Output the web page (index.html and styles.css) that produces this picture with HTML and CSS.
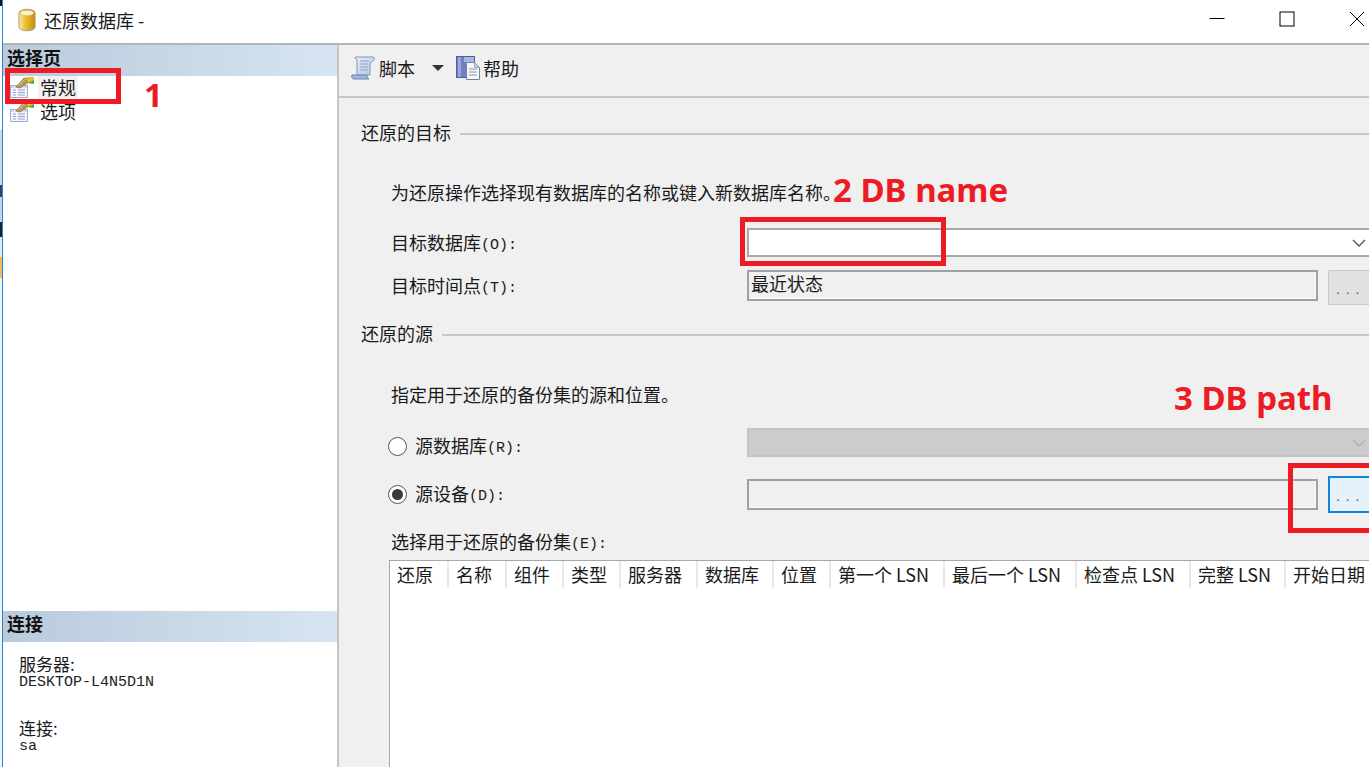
FILE: index.html
```html
<!DOCTYPE html>
<html lang="zh-CN">
<head>
    <meta charset="utf-8">
    <title>还原数据库</title>
    <link rel="stylesheet" href="styles.css">
</head>
<body>
    <svg class="defs" width="0" height="0">
        <symbol id="page-icon" viewBox="0 0 24 21">
            <rect x="0.500" y="8.500" width="17" height="12" fill="#f3f5fb" stroke="#a3aec8"/>
            <rect x="1" y="9" width="16" height="2" fill="#d3dcef"/>
            <path d="M3 13h3M3 15.500h3M3 18h3M8 13h7M8 15.500h7M8 18h7" stroke="#8ea3d0" stroke-width="1.200"/>
            <path d="M6 10l8-9 3 1 2 3-9 6z" fill="#b99a55" stroke="#857343" stroke-width=".7"/>
            <path d="M8 9l7-7" stroke="#e3cf96" stroke-width=".8"/>
            <path d="M15 1l8-1 1 3-5 3z" fill="#e9c61f" stroke="#a89222" stroke-width=".5"/>
            <path d="M18 6l6-3v4z" fill="#4fa83a"/>
        </symbol>
    </svg>

    <div class="window">
        <header class="titlebar">
            <svg class="db-icon" width="18" height="24" viewBox="0 0 20 24" preserveAspectRatio="none">
                <defs>
                    <linearGradient id="dbfill" x1="0" x2="1" y1="0" y2="0">
                        <stop offset="0" stop-color="#f7e9a0"/>
                        <stop offset=".45" stop-color="#e8bd2e"/>
                        <stop offset="1" stop-color="#c98d08"/>
                    </linearGradient>
                </defs>
                <path d="M1 5c0-5 18-5 18 0v14c0 5-18 5-18 0z" fill="url(#dbfill)" stroke="#a8a08a"/>
                <ellipse cx="10" cy="5" rx="7.500" ry="2.800" fill="#fbf3c4" stroke="#c9b060" stroke-width=".7"/>
            </svg>
            <span class="title-text">还原数据库 -</span>
            <div class="win-controls">
                <svg width="16" height="16" viewBox="0 0 16 16"><path d="M0.500 7.500h15" stroke="#000" fill="none"/></svg>
                <svg width="16" height="16" viewBox="0 0 16 16"><rect x="1" y="1" width="14" height="14" stroke="#000" fill="none"/></svg>
                <svg width="16" height="16" viewBox="0 0 16 16"><path d="M1 1l14 14M15 1L1 15" stroke="#000" fill="none"/></svg>
            </div>
        </header>

        <div class="main">
            <aside class="sidebar">
                <h2 class="side-head">选择页</h2>
                <ul class="page-list">
                    <li class="page-item">
                        <svg class="page-icon" width="24" height="21"><use href="#page-icon"/></svg>
                        <span class="page-name selected">常规</span>
                    </li>
                    <li class="page-item">
                        <svg class="page-icon" width="24" height="21"><use href="#page-icon"/></svg>
                        <span class="page-name">选项</span>
                    </li>
                </ul>
                <div class="connection">
                    <h2 class="side-head">连接</h2>
                    <div class="conn-info">
                        <div class="conn-label">服务器:</div>
                        <div class="conn-value">DESKTOP-L4N5D1N</div>
                        <div class="conn-label second">连接:</div>
                        <div class="conn-value">sa</div>
                    </div>
                </div>
            </aside>

            <section class="content">
                <div class="toolbar">
                    <svg width="26" height="26" viewBox="0 0 26 26">
                        <defs>
                            <linearGradient id="scroll" x1="0" x2="1" y1="0" y2="1">
                                <stop offset="0" stop-color="#e6edf8"/>
                                <stop offset="1" stop-color="#b4c8e4"/>
                            </linearGradient>
                        </defs>
                        <path d="M6 2h17c1.500 0 2 2 .5 3.500L20 8v12H7V6C7 4 6 3 4.500 3z" fill="url(#scroll)" stroke="#7d97bc"/>
                        <path d="M2 20h15c0 1.500 .5 3 2 4H4c-2 0-3-3-2-4z" fill="#9db8dc" stroke="#6a88b2"/>
                        <path d="M10 6h9M10 9h8M10 12h8M10 15h8" stroke="#8aa2c6"/>
                    </svg>
                    <span class="tool-text">脚本</span>
                    <span class="tool-arrow"></span>
                    <svg width="25" height="26" viewBox="0 0 25 26">
                        <rect x="0.500" y="1.500" width="18" height="21" fill="#6f80c4" stroke="#4d5f9c"/>
                        <rect x="2" y="2" width="3" height="20" fill="#98a8dc"/>
                        <rect x="8" y="2" width="10" height="5" fill="#a9b8e2"/>
                        <path d="M10.500 7.500h8l5 5v12h-13z" fill="#f5f7fb" stroke="#71849f"/>
                        <path d="M18.500 7.500v5h5z" fill="#c9d3e2" stroke="#71849f" stroke-width=".6"/>
                        <path d="M13 14h8M13 17h8M13 20h8" stroke="#8898ae"/>
                    </svg>
                    <span class="tool-text help">帮助</span>
                </div>

                <div class="form">
                    <div class="section-title first">还原的目标</div>
                    <div class="group">
                        <p class="hint first-hint">为还原操作选择现有数据库的名称或键入新数据库名称。</p>
                        <div class="row combo-row">
                            <label>目标数据库<span class="mono">(O):</span></label>
                            <div class="combo">
                                <svg class="chevron" width="14" height="8" viewBox="0 0 14 8"><path d="M1 1l6 6 6-6" fill="none" stroke="#606060" stroke-width="1.500"/></svg>
                            </div>
                        </div>
                        <div class="row time-row">
                            <label>目标时间点<span class="mono">(T):</span></label>
                            <div class="field">最近状态</div>
                            <div class="dots-btn">. . .</div>
                        </div>
                    </div>

                    <div class="section-title second">还原的源</div>
                    <div class="group">
                        <p class="hint second-hint">指定用于还原的备份集的源和位置。</p>
                        <div class="row source-row">
                            <label class="radio-label"><span class="radio"></span><span class="label-text">源数据库<span class="mono">(R):</span></span></label>
                            <div class="combo disabled">
                                <svg class="chevron" width="14" height="8" viewBox="0 0 14 8"><path d="M1 1l6 6 6-6" fill="none" stroke="#b4b4b4" stroke-width="1.500"/></svg>
                            </div>
                        </div>
                        <div class="row device-row">
                            <label class="radio-label"><span class="radio on"></span><span class="label-text">源设备<span class="mono">(D):</span></span></label>
                            <div class="field"></div>
                            <div class="dots-btn hover">. . .</div>
                        </div>
                        <div class="backup-label">选择用于还原的备份集<span class="mono">(E):</span></div>
                        <div class="backup-table">
                            <div class="table-head">
                                <span class="col">还原</span>
                                <span class="col">名称</span>
                                <span class="col">组件</span>
                                <span class="col">类型</span>
                                <span class="col">服务器</span>
                                <span class="col">数据库</span>
                                <span class="col">位置</span>
                                <span class="col">第一个 LSN</span>
                                <span class="col">最后一个 LSN</span>
                                <span class="col">检查点 LSN</span>
                                <span class="col">完整 LSN</span>
                                <span class="col last">开始日期</span>
                            </div>
                        </div>
                    </div>
                </div>
            </section>
        </div>
    </div>

    <!-- annotations drawn on top of the screenshot -->
    <div class="mark mark-1"></div>
    <div class="mark mark-2"></div>
    <div class="mark mark-3"></div>
    <div class="note note-1">1</div>
    <div class="note note-2">2 DB name</div>
    <div class="note note-3">3 DB path</div>
</body>
</html>
```

FILE: styles.css
```css
* {
    box-sizing: border-box;
}

html, body {
    margin: 0;
    height: 767px;
    overflow: hidden;
}

body {
    position: relative;
    /* bits of the desktop showing left of the window */
    background:
        linear-gradient(to bottom,
            #111 0, #111 6px,
            #fff 6px, #fff 130px,
            #d8d8d8 130px, #d8d8d8 185px,
            #3a3f6a 185px, #3a3f6a 197px,
            #c4d4e4 197px, #c4d4e4 222px,
            #222 222px, #222 237px,
            #e8e8e8 237px, #e8e8e8 257px,
            #e8c15a 257px, #e8c15a 278px,
            #f4f4f4 278px) no-repeat left top / 2px 100%,
        #fff;
    color: #1a1a1a;
    font-family: "Noto Sans CJK SC", "Liberation Sans", sans-serif;
    font-size: 18px;
}

.defs {
    position: absolute;
}

.window {
    height: 767px;
    margin-left: 2px;
    border-left: 1px solid #1a86e0;
    display: flex;
    flex-direction: column;
    overflow: hidden;
}

.titlebar {
    height: 43px;
    flex: none;
    display: flex;
    align-items: center;
    padding: 0 0 4px 15px;
    background: #fff;
}

.db-icon {
    margin-right: 8px;
}

.title-text {
    line-height: 1;
}

.win-controls {
    margin-left: auto;
    margin-right: 4px;
    display: flex;
    gap: 54px;
    padding-bottom: 1px;
}

.main {
    flex: 1;
    display: flex;
    min-height: 0;
    border-top: 2px solid #b4b4b4;
}

.sidebar {
    width: 336px;
    flex: none;
    background: #fff;
    border-right: 2px solid #c4c4c4;
    display: flex;
    flex-direction: column;
}

.side-head {
    margin: 0;
    height: 31px;
    padding-left: 4px;
    font-size: 18px;
    font-weight: 700;
    line-height: 24px;
    color: #111;
    background: linear-gradient(to right, #b9cadb, #d7e5f2);
}

.page-list {
    list-style: none;
    margin: 0;
    padding: 0;
}

.page-item {
    height: 24px;
    display: flex;
    align-items: center;
    padding: 0 0 2px 7px;
}

.page-icon {
    flex: none;
}

.page-name {
    margin-left: 4px;
    padding: 0 2px;
    line-height: 22px;
}

.page-name.selected {
    background: #f1f1f1;
}

.connection {
    margin-top: auto;
    height: 156px;
}

.conn-info {
    padding: 12px 0 0 16px;
}

.conn-label {
    line-height: 20px;
    font-size: 17px;
    height: 20px;
}

.conn-label.second {
    margin-top: 26px;
}

.conn-value {
    font-family: "Liberation Mono", monospace;
    font-size: 15px;
    line-height: 17px;
    height: 18px;
    color: #222;
}

.content {
    flex: 1;
    min-width: 0;
    background: #f0f0f0;
}

.toolbar {
    height: 53px;
    display: flex;
    align-items: center;
    padding: 0 0 5px 11px;
    border-bottom: 2px solid #c4c4ca;
}

.tool-text {
    margin-left: 3px;
}

.tool-text.help {
    margin-left: 2px;
}

.tool-arrow {
    width: 0;
    height: 0;
    margin: 0 12px 0 17px;
    border-left: 6px solid transparent;
    border-right: 6px solid transparent;
    border-top: 6px solid #333;
}

.form {
    padding-left: 22px;
}

.section-title {
    height: 24px;
    line-height: 24px;
    display: flex;
    align-items: center;
    gap: 9px;
}

.section-title::after {
    content: "";
    flex: 1;
    height: 2px;
    margin-top: 4px;
    background: #c8c8c8;
}

.section-title.first {
    margin-top: 22px;
}

.section-title.second {
    margin-top: 16px;
}

.group {
    padding-left: 30px;
}

.hint {
    margin: 0;
    height: 24px;
    line-height: 24px;
}

.first-hint {
    margin-top: 36px;
}

.second-hint {
    margin-top: 37px;
}

.mono {
    font-family: "Liberation Mono", monospace;
    font-size: 15px;
    line-height: 1;
    vertical-align: 1px;
}

.row {
    display: grid;
    grid-template-columns: 356px 571px 10px 1fr;
    align-items: center;
}

.row label {
    grid-column: 1;
    line-height: 29px;
}

.combo-row {
    margin-top: 24px;
    height: 29px;
}

.time-row {
    margin-top: 13px;
    height: 35px;
    align-items: start;
}

.time-row label {
    line-height: 31px;
}

.source-row {
    margin-top: 22px;
    height: 29px;
}

.source-row label {
    height: 29px;
    padding-top: 7px;
}

.device-row {
    margin-top: 19px;
    height: 37px;
}

.combo {
    grid-column: 2 / 5;
    height: 29px;
    background: #fff;
    border: 2px solid #a8a8a8;
    border-right: none;
    display: flex;
    align-items: center;
    justify-content: flex-end;
    padding-right: 3px;
}

.combo.disabled {
    background: #cccccc;
    border-color: #c4c4c4;
}

.field {
    grid-column: 2;
    height: 31px;
    border: 2px solid #a0a0a0;
    box-shadow: inset -1px -1px 0 #fafafa;
    background: #f0f0f0;
    padding-left: 2px;
    line-height: 23px;
}

.dots-btn {
    grid-column: 4;
    height: 35px;
    background: #e1e1e1;
    border: 1px solid #c9c9c9;
    border-right: none;
    padding-left: 7px;
    font-family: "Liberation Sans", sans-serif;
    font-size: 14px;
    line-height: 36px;
    letter-spacing: 1px;
    color: #555;
}

.dots-btn.hover {
    height: 37px;
    background: #e5f1fb;
    border: 2px solid #0f85dc;
    border-right: none;
    padding-left: 6px;
}

.radio-label {
    margin-left: -3px;
    display: flex;
    align-items: center;
}

.label-text {
    margin-top: -2px;
}

.radio {
    width: 19px;
    height: 19px;
    margin-right: 8px;
    flex: none;
    border-radius: 50%;
    border: 1.5px solid #555;
    background: #fff;
    display: flex;
    align-items: center;
    justify-content: center;
}

.radio.on::after {
    content: "";
    width: 11px;
    height: 11px;
    border-radius: 50%;
    background: #3a3a3a;
}

.backup-label {
    margin-top: 16px;
    height: 24px;
    line-height: 24px;
}

.backup-table {
    margin-top: 7px;
    margin-left: -2px;
    height: 240px;
    background: #fff;
    border: 1px solid #a8a8a8;
    border-right: none;
}

.table-head {
    display: grid;
    grid-template-columns: 59px 58px 57px 57px 77px 76px 57px 114px 132px 114px 95px 1fr;
    height: 27px;
}

.col {
    padding-left: 7px;
    border-right: 2px solid #e8e8e8;
    line-height: 27px;
    white-space: nowrap;
}

.col.last {
    border-right: none;
}

/* red annotations */
.mark {
    position: absolute;
    border: 5px solid #ed1c24;
}

.mark-1 {
    left: 5px;
    top: 68px;
    width: 116px;
    height: 36px;
}

.mark-2 {
    left: 740px;
    top: 217px;
    width: 206px;
    height: 49px;
}

.mark-3 {
    left: 1288px;
    top: 463px;
    width: 100px;
    height: 70px;
}

.note {
    position: absolute;
    color: #ed1c24;
    font-family: "Noto Sans", sans-serif;
    font-weight: 700;
    font-size: 33px;
    line-height: 40px;
    white-space: nowrap;
}

.note-1 {
    left: 144px;
    top: 75px;
}

.note-2 {
    left: 833px;
    top: 170px;
}

.note-3 {
    left: 1174px;
    top: 378px;
}
```
